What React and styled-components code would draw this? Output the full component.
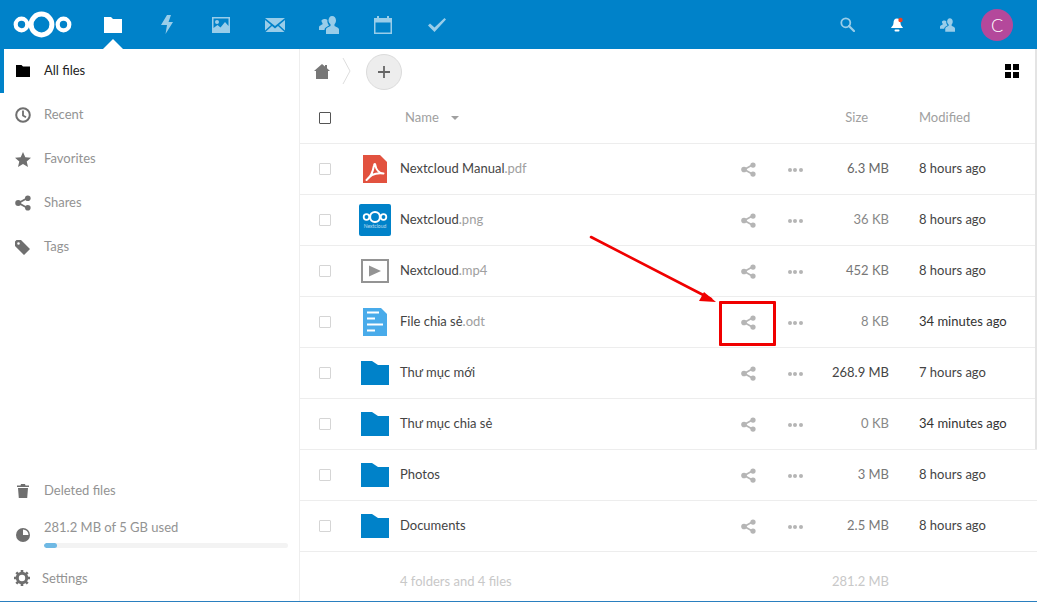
import React from "react";
import styled, { createGlobalStyle } from "styled-components";

const GlobalStyle = createGlobalStyle`
  html, body {
    margin: 0;
    height: 100%;
    overflow: hidden;
    background: #fff;
  }
  body {
    font-family: "Lato", "Open Sans", "Noto Sans", sans-serif;
    font-size: 13px;
    color: #222;
  }
`;

const Logo = () => (
  <svg width="60" height="30" viewBox="0 0 60 30">
    <g fill="none" stroke="#fff">
      <circle cx="28.5" cy="14.5" r="10.4" strokeWidth="5" />
      <circle cx="8.5" cy="14.5" r="5.8" strokeWidth="4.2" />
      <circle cx="50.5" cy="14.5" r="5.8" strokeWidth="4.2" />
    </g>
  </svg>
);

const FilesIcon = () => (
  <svg width="18" height="16" viewBox="0 0 18 16">
    <path d="M0 0h7l2 2h9v14H0z" fill="#fff" />
  </svg>
);
const BoltIcon = () => (
  <svg width="14" height="19" viewBox="0 0 14 19">
    <path d="M7 0h4L8.500 7H13L5.500 19 7 10H1z" fill="#fff" />
  </svg>
);
const ImageIcon = () => (
  <svg width="18" height="16" viewBox="0 0 18 16">
    <path
      fillRule="evenodd"
      d="M0 0h18v16H0zM1.500 1.500V11l4-3 3 2.500L13 5l3.500 4V1.500zM5 3a2 2 0 1 1 0 4 2 2 0 0 1 0-4z"
      fill="#fff"
    />
  </svg>
);
const MailIcon = () => (
  <svg width="20" height="14" viewBox="0 0 20 14">
    <path
      d="M0 0h20L10 8zM0 2l6 5-6 5.500zM20 2v10.500L14 7zM7 8l3 2.500L13 8l6.500 6H.5z"
      fill="#fff"
    />
  </svg>
);
const ContactsIcon = ({ width = 20, height = 18 }) => (
  <svg width={width} height={height} viewBox="0 0 20 18">
    <path
      d="M13 0c2.500 0 4 2 4 4.500 0 1.500-.7 3-1.500 3.800V10c1 .7 4.500 1.500 4.500 3.500V18H7v-4.500c0-2 3.500-2.800 4.500-3.500V8.300C10.500 7.500 9.500 6 9.500 4.500 9.500 2 11 0 13 0zM6 3c1 0 1.800.4 2.400 1-.3 2 .4 4 1.600 5.200v.3C8.500 10.400 5.500 11.500 5.500 14H0v-3c0-1.500 2.500-2 3.500-2.800V7C2.800 6.500 2.500 5.500 2.500 4.500 3 3.500 4.500 3 6 3z"
      fill="#fff"
    />
  </svg>
);
const CalendarIcon = () => (
  <svg width="18" height="18" viewBox="0 0 18 18">
    <path
      fillRule="evenodd"
      d="M3 0h2v2h8V0h2v2h3v16H0V2h3zM1.500 6.500v10h15v-10z"
      fill="#fff"
    />
  </svg>
);
const CheckIcon = () => (
  <svg width="18" height="14" viewBox="0 0 18 14">
    <path d="M6.500 14 0 7.500l2-2 4.500 4L16.500 0 18 1.500z" fill="#fff" />
  </svg>
);
const SearchIcon = () => (
  <svg width="15" height="15" viewBox="0 0 15 15">
    <circle cx="5.800" cy="5.800" r="4.500" fill="none" stroke="#fff" strokeWidth="1.800" />
    <path d="M9 9l5 5" stroke="#fff" strokeWidth="2.200" strokeLinecap="round" />
  </svg>
);
const BellIcon = () => (
  <svg width="14" height="16" viewBox="0 0 14 16">
    <path d="M7 1.500c2.500 0 3.500 2 3.500 4.500 0 2.500 2 3.500 2.500 5H1c.5-1.500 2.500-2.500 2.500-5C3.500 3.500 4.500 1.500 7 1.500z" fill="#fff" />
    <rect x="4.500" y="12.500" width="5" height="2" rx="1" fill="#fff" />
    <circle cx="10.500" cy="3" r="2.200" fill="#f0401f" />
  </svg>
);

const HomeIcon = () => (
  <svg width="16" height="15" viewBox="0 0 16 15">
    <path d="M8 0l3 2.600V1h2v3.300L16 7h-2v8H2V7H0z" fill="#777" />
  </svg>
);
const GridIcon = () => (
  <svg width="14" height="14" viewBox="0 0 14 14">
    <path d="M0 0h6v6H0zM8 0h6v6H8zM0 8h6v6H0zM8 8h6v6H8z" fill="#000" />
  </svg>
);

const NavFolder = () => (
  <svg width="14" height="12" viewBox="0 0 14 12">
    <path d="M0 0h5.500l1.500 1.500h7V12H0z" fill="#000" />
  </svg>
);
const ClockIcon = () => (
  <svg width="16" height="16" viewBox="0 0 16 16">
    <circle cx="8" cy="8" r="6.800" fill="none" stroke="#6f6f6f" strokeWidth="2" />
    <path d="M8 3.500V8.500l3 1.800" fill="none" stroke="#6f6f6f" strokeWidth="1.800" />
  </svg>
);
const StarIcon = () => (
  <svg width="16" height="15" viewBox="0 0 16 15">
    <path d="M8 0l2.300 5.200 5.700.5-4.300 3.700 1.300 5.600L8 12l-5 3 1.300-5.600L0 5.700l5.700-.5z" fill="#6f6f6f" />
  </svg>
);
const ShareIcon = ({ size = 15, color = "#b5b5b5" }) => (
  <svg width={size} height={size} viewBox="0 0 16 16">
    <path d="M12.500 3 3.500 8l9 5" fill="none" stroke={color} strokeWidth="1.800" />
    <circle cx="12.800" cy="3.200" r="2.800" fill={color} />
    <circle cx="12.800" cy="12.800" r="2.800" fill={color} />
    <circle cx="3.200" cy="8" r="3" fill={color} />
  </svg>
);
const TagIcon = () => (
  <svg width="15" height="15" viewBox="0 0 15 15">
    <path d="M0 1.500 1.500 0H6l9 9-6 6-9-9zM3.500 2.200a1.300 1.300 0 1 0 0 2.600 1.300 1.300 0 0 0 0-2.600z" fillRule="evenodd" fill="#6f6f6f" />
  </svg>
);
const TrashIcon = () => (
  <svg width="12" height="14" viewBox="0 0 12 14">
    <path d="M0 1.500h3.500L4 0h4l.5 1.500H12V3H0zM1 4h10l-.8 10H1.800z" fill="#6f6f6f" />
  </svg>
);
const QuotaIcon = () => (
  <svg width="14" height="14" viewBox="0 0 14 14">
    <circle cx="7" cy="7" r="7" fill="#6f6f6f" />
    <path d="M7 1.500A5.500 5.500 0 0 1 12.500 7H7z" fill="#fff" />
  </svg>
);
const GearIcon = () => (
  <svg width="16" height="16" viewBox="0 0 16 16">
    <circle cx="8" cy="8" r="4.700" fill="none" stroke="#6f6f6f" strokeWidth="3" />
    <path d="M8 0v3M8 13v3M0 8h3M13 8h3M2.300 2.300l2 2M11.700 11.700l2 2M2.300 13.700l2-2M11.700 4.300l2-2" stroke="#6f6f6f" strokeWidth="2.600" />
  </svg>
);

const PdfIcon = () => (
  <svg width="24" height="28" viewBox="0 0 24 28">
    <path d="M0 0h17l7 7v21H0z" fill="#e2523f" />
    <path
      d="M3.500 25c3-2 6-6 7.500-14.500.3-2 1.300-2 1.500 0 .5 4 3.500 7.500 8 8-4-.5-8-.2-11.500 1.500-2 1-3.500 3-5.500 5z"
      fill="none"
      stroke="#fff"
      strokeWidth="2"
      strokeLinejoin="round"
    />
  </svg>
);
const PngIcon = () => (
  <svg width="32" height="32" viewBox="0 0 32 32">
    <rect width="32" height="32" rx="2" fill="#0082c9" />
    <g fill="none" stroke="#fff">
      <circle cx="16" cy="13" r="5" strokeWidth="2.200" />
      <circle cx="7.500" cy="13" r="2.800" strokeWidth="1.800" />
      <circle cx="24.500" cy="13" r="2.800" strokeWidth="1.800" />
    </g>
    <text x="16" y="24" fontSize="5" textAnchor="middle" fill="#fff" opacity="0.7" fontFamily="Lato, sans-serif">
      Nextcloud
    </text>
  </svg>
);
const VideoIcon = () => (
  <svg width="28" height="24" viewBox="0 0 28 24">
    <rect x="1" y="1" width="26" height="22" fill="none" stroke="#949494" strokeWidth="2" />
    <path d="M8 6.500 20 12 8 17.500z" fill="#949494" />
  </svg>
);
const DocIcon = () => (
  <svg width="24" height="28" viewBox="0 0 24 28">
    <path d="M0 0h18l6 6v22H0z" fill="#49abea" />
    <path d="M4 4.500h12M4 10.500h8M4 16.500h16M4 22.500h8" stroke="#fff" strokeWidth="2" />
  </svg>
);
const FolderIcon = () => (
  <svg width="28" height="24" viewBox="0 0 28 24">
    <path d="M0 0h11l6 4h11v20H0z" fill="#0082c9" />
  </svg>
);

const files = [
  { name: "Nextcloud Manual", ext: ".pdf", icon: <PdfIcon />, size: "6.3 MB", sizeColor: "#666", time: "8 hours ago", timeColor: "#444" },
  { name: "Nextcloud", ext: ".png", icon: <PngIcon />, size: "36 KB", sizeColor: "#888", time: "8 hours ago", timeColor: "#444" },
  { name: "Nextcloud", ext: ".mp4", icon: <VideoIcon />, size: "452 KB", sizeColor: "#777", time: "8 hours ago", timeColor: "#444" },
  { name: "File chia sẻ", ext: ".odt", icon: <DocIcon />, size: "8 KB", sizeColor: "#888", time: "34 minutes ago", timeColor: "#333" },
  { name: "Thư mục mới", icon: <FolderIcon />, size: "268.9 MB", sizeColor: "#444", time: "7 hours ago", timeColor: "#444" },
  { name: "Thư mục chia sẻ", icon: <FolderIcon />, size: "0 KB", sizeColor: "#888", time: "34 minutes ago", timeColor: "#333" },
  { name: "Photos", icon: <FolderIcon />, size: "3 MB", sizeColor: "#777", time: "8 hours ago", timeColor: "#444" },
  { name: "Documents", icon: <FolderIcon />, size: "2.5 MB", sizeColor: "#777", time: "8 hours ago", timeColor: "#444" },
];

const topNav = [
  { key: "files", icon: <FilesIcon />, active: true },
  { key: "activity", icon: <BoltIcon /> },
  { key: "gallery", icon: <ImageIcon /> },
  { key: "mail", icon: <MailIcon /> },
  { key: "contacts", icon: <ContactsIcon /> },
  { key: "calendar", icon: <CalendarIcon /> },
  { key: "tasks", icon: <CheckIcon /> },
];

const sideNav = [
  { label: "Recent", icon: <ClockIcon /> },
  { label: "Favorites", icon: <StarIcon /> },
  { label: "Shares", icon: <ShareIcon size={16} color="#6f6f6f" /> },
  { label: "Tags", icon: <TagIcon /> },
];

const S = {
  Page: styled.div`
    position: relative;
    display: flex;
    flex-direction: column;
    height: 602px;
    border-bottom: 1px solid #2a7fbf;
    box-sizing: border-box;
    overflow: hidden;
  `,
  Header: styled.header`
    flex: 0 0 49px;
    display: flex;
    align-items: center;
    background: #0082c9;
    padding-left: 13px;
  `,
  LogoBox: styled.div`
    display: flex;
    width: 73px;
  `,
  TopNav: styled.nav`
    display: flex;
    flex: 1;
    height: 49px;
  `,
  TopItem: styled.div`
    position: relative;
    width: 54px;
    display: flex;
    align-items: center;
    justify-content: center;
    opacity: ${(p) => (p.$active ? 1 : 0.6)};
    ${(p) =>
      p.$active &&
      `&::after {
        content: "";
        position: absolute;
        bottom: 0;
        left: 17px;
        border-left: 10px solid transparent;
        border-right: 10px solid transparent;
        border-bottom: 10px solid #fff;
      }`}
  `,
  RightTools: styled.div`
    display: flex;
    align-items: center;
    padding-right: 24px;
  `,
  Tool: styled.div`
    width: 50px;
    display: flex;
    justify-content: center;
    opacity: ${(p) => (p.$dim ? 0.6 : 1)};
  `,
  Avatar: styled.div`
    width: 32px;
    height: 32px;
    margin-left: 9px;
    border-radius: 50%;
    background: #b4489b;
    color: #fff;
    font-size: 18px;
    font-weight: 300;
    display: flex;
    align-items: center;
    justify-content: center;
  `,
  Body: styled.div`
    flex: 1;
    display: flex;
    min-height: 0;
  `,
  Sidebar: styled.aside`
    flex: 0 0 300px;
    box-sizing: border-box;
    border-right: 1px solid #eee;
    display: flex;
    flex-direction: column;
    justify-content: space-between;
  `,
  SideList: styled.div`
    display: flex;
    flex-direction: column;
  `,
  SideItem: styled.div`
    height: 44px;
    display: flex;
    align-items: center;
    color: ${(p) => (p.$active ? "#222" : "#939393")};
    border-left: 4px solid ${(p) => (p.$active ? "#0082c9" : "transparent")};
  `,
  SideIcon: styled.span`
    width: 40px;
    flex: none;
    display: flex;
    justify-content: center;
    padding-right: 3px;
    box-sizing: border-box;
  `,
  SideLabel: styled.span`
    margin-top: -2px;
  `,
  SideBottom: styled.div`
    display: flex;
    flex-direction: column;
    padding-bottom: 1px;
  `,
  Quota: styled.div`
    height: 43px;
    display: flex;
    align-items: center;
    border-left: 4px solid transparent;
    color: #939393;
  `,
  QuotaText: styled.div`
    flex: 1;
    padding-right: 11px;
    margin-top: -3px;
  `,
  QuotaBar: styled.div`
    height: 5px;
    margin-top: 8px;
    border-radius: 3px;
    background: #f3f3f3;
    overflow: hidden;
  `,
  QuotaFill: styled.div`
    height: 100%;
    border-radius: 3px;
    background: #6fb9e4;
  `,
  SettingsItem: styled.div`
    height: 44px;
    display: flex;
    align-items: center;
    color: #939393;
    border-left: 4px solid transparent;
  `,
  SettingsIcon: styled.span`
    width: 38px;
    flex: none;
    display: flex;
    justify-content: center;
    padding-right: 2px;
    box-sizing: border-box;
  `,
  Main: styled.main`
    flex: 1;
    min-width: 0;
    display: flex;
    flex-direction: column;
    overflow: hidden;
  `,
  Crumbs: styled.div`
    height: 47px;
    flex: none;
    display: flex;
    align-items: center;
    padding: 0 18px 1px 14px;
    box-sizing: border-box;
  `,
  HomeBox: styled.span`
    display: flex;
    margin-top: -2px;
  `,
  Separator: styled.svg`
    margin-left: 12px;
    margin-top: -2px;
  `,
  AddButton: styled.div`
    width: 36px;
    height: 36px;
    margin-left: 15px;
    box-sizing: border-box;
    border-radius: 50%;
    border: 1px solid #dbdbdb;
    background: #ededed;
    display: flex;
    align-items: center;
    justify-content: center;
  `,
  GridButton: styled.div`
    margin-left: auto;
    margin-top: -2px;
    display: flex;
  `,
  Row: styled.div`
    flex: none;
    display: grid;
    grid-template-columns: 50px 50px 324px 48px 46px 71px 1fr;
    align-items: center;
    height: ${(p) => p.$height || 51}px;
    box-sizing: border-box;
    border-bottom: 1px solid #ededed;
  `,
  Check: styled.span`
    justify-self: center;
    width: 12px;
    height: 12px;
    box-sizing: border-box;
    border: 1px solid ${(p) => (p.$dark ? "#555" : "#d5d5d5")};
    border-radius: 1px;
    margin-top: ${(p) => (p.$dark ? -4 : 0)}px;
    background: #fff;
  `,
  HeadLabel: styled.span`
    color: #a0a0a0;
    padding-left: ${(p) => p.$pad || 0}px;
    padding-right: ${(p) => p.$padRight || 0}px;
    margin-left: ${(p) => p.$shift || 0}px;
    grid-column: ${(p) => p.$col};
    display: flex;
    align-items: center;
    justify-content: ${(p) => (p.$align === "right" ? "flex-end" : "flex-start")};
    margin-top: -5px;
  `,
  SortCaret: styled.span`
    margin-left: 12px;
    border-left: 4px solid transparent;
    border-right: 4px solid transparent;
    border-top: 4px solid #a0a0a0;
    margin-top: 2px;
  `,
  FileIcon: styled.span`
    display: flex;
    justify-content: center;
    margin-left: -1px;
  `,
  FileName: styled.span`
    color: #444;
    white-space: nowrap;
    margin-top: -2px;
  `,
  FileExt: styled.span`
    color: #a0a0a0;
  `,
  ActionCell: styled.span`
    display: flex;
    justify-content: center;
    margin-top: 1px;
  `,
  Dots: styled.span`
    display: flex;
    gap: 1.500px;
    i {
      width: 4px;
      height: 4px;
      border-radius: 50%;
      background: #b5b5b5;
    }
  `,
  Size: styled.span`
    text-align: right;
    margin-top: -2px;
    color: ${(p) => p.$color};
  `,
  Time: styled.span`
    padding-left: 30px;
    margin-top: -2px;
    color: ${(p) => p.$color};
    white-space: nowrap;
  `,
  Summary: styled.div`
    flex: none;
    display: grid;
    grid-template-columns: 100px 324px 48px 46px 71px 1fr;
    align-items: center;
    height: 57px;
    color: #c8c8c8;
  `,
  SummaryLabel: styled.span`
    grid-column: 2;
  `,
  SummarySize: styled.span`
    grid-column: 5;
    text-align: right;
  `,
  Highlight: styled.div`
    position: absolute;
    left: 719px;
    top: 301px;
    width: 57px;
    height: 45px;
    box-sizing: border-box;
    border: 3px solid #f00000;
    border-radius: 1px;
    pointer-events: none;
  `,
  Arrow: styled.svg`
    position: absolute;
    left: 585px;
    top: 230px;
    pointer-events: none;
  `,
  Scrollbar: styled.div`
    position: absolute;
    right: 0;
    top: 49px;
    width: 2px;
    height: 400px;
    background: #e4e4e4;
  `,
};

const App = () => {
  return (
    <S.Page>
      <GlobalStyle />
      <S.Header>
        <S.LogoBox>
          <Logo />
        </S.LogoBox>
        <S.TopNav>
          {topNav.map((item) => (
            <S.TopItem key={item.key} $active={item.active}>
              {item.icon}
            </S.TopItem>
          ))}
        </S.TopNav>
        <S.RightTools>
          <S.Tool $dim>
            <SearchIcon />
          </S.Tool>
          <S.Tool>
            <BellIcon />
          </S.Tool>
          <S.Tool $dim>
            <ContactsIcon width={15} height={14} />
          </S.Tool>
          <S.Avatar>C</S.Avatar>
        </S.RightTools>
      </S.Header>

      <S.Body>
        <S.Sidebar>
          <S.SideList>
            <S.SideItem $active>
              <S.SideIcon>
                <NavFolder />
              </S.SideIcon>
              <S.SideLabel>All files</S.SideLabel>
            </S.SideItem>
            {sideNav.map((item) => (
              <S.SideItem key={item.label}>
                <S.SideIcon>{item.icon}</S.SideIcon>
                <S.SideLabel>{item.label}</S.SideLabel>
              </S.SideItem>
            ))}
          </S.SideList>
          <S.SideBottom>
            <S.SideItem>
              <S.SideIcon>
                <TrashIcon />
              </S.SideIcon>
              <S.SideLabel>Deleted files</S.SideLabel>
            </S.SideItem>
            <S.Quota>
              <S.SideIcon>
                <QuotaIcon />
              </S.SideIcon>
              <S.QuotaText>
                281.2 MB of 5 GB used
                <S.QuotaBar>
                  <S.QuotaFill style={{ width: `${(281.2 / 5120) * 100}%` }} />
                </S.QuotaBar>
              </S.QuotaText>
            </S.Quota>
            <S.SettingsItem>
              <S.SettingsIcon>
                <GearIcon />
              </S.SettingsIcon>
              Settings
            </S.SettingsItem>
          </S.SideBottom>
        </S.Sidebar>

        <S.Main>
          <S.Crumbs>
            <S.HomeBox>
              <HomeIcon />
            </S.HomeBox>
            <S.Separator width="9" height="26" viewBox="0 0 9 26">
              <path d="M1 0l7 13-7 13" fill="none" stroke="#ddd" />
            </S.Separator>
            <S.AddButton>
              <svg width="12" height="12" viewBox="0 0 12 12">
                <path d="M6 0v12M0 6h12" stroke="#666" strokeWidth="1.800" />
              </svg>
            </S.AddButton>
            <S.GridButton>
              <GridIcon />
            </S.GridButton>
          </S.Crumbs>

          <S.Row $height={48}>
            <S.Check $dark />
            <S.HeadLabel $col={3} $shift={5}>
              Name
              <S.SortCaret />
            </S.HeadLabel>
            <S.HeadLabel $col={6} $align="right" $padRight={21}>
              Size
            </S.HeadLabel>
            <S.HeadLabel $col={7} $pad={30}>
              Modified
            </S.HeadLabel>
          </S.Row>

          {files.map((file) => (
            <S.Row key={file.name + (file.ext || "")}>
              <S.Check />
              <S.FileIcon>{file.icon}</S.FileIcon>
              <S.FileName>
                {file.name}
                {file.ext && <S.FileExt>{file.ext}</S.FileExt>}
              </S.FileName>
              <S.ActionCell>
                <ShareIcon />
              </S.ActionCell>
              <S.ActionCell>
                <S.Dots>
                  <i />
                  <i />
                  <i />
                </S.Dots>
              </S.ActionCell>
              <S.Size $color={file.sizeColor}>{file.size}</S.Size>
              <S.Time $color={file.timeColor}>{file.time}</S.Time>
            </S.Row>
          ))}

          <S.Summary>
            <S.SummaryLabel>4 folders and 4 files</S.SummaryLabel>
            <S.SummarySize>281.2 MB</S.SummarySize>
          </S.Summary>
        </S.Main>
      </S.Body>

      <S.Scrollbar />
      <S.Highlight />
      <S.Arrow width="140" height="80" viewBox="0 0 140 80">
        <path d="M6 7l120 62" stroke="#f00000" strokeWidth="2.600" strokeLinecap="round" />
        <path d="M131 72l-17-1 5-9z" fill="#f00000" />
      </S.Arrow>
    </S.Page>
  );
};

export default App;
